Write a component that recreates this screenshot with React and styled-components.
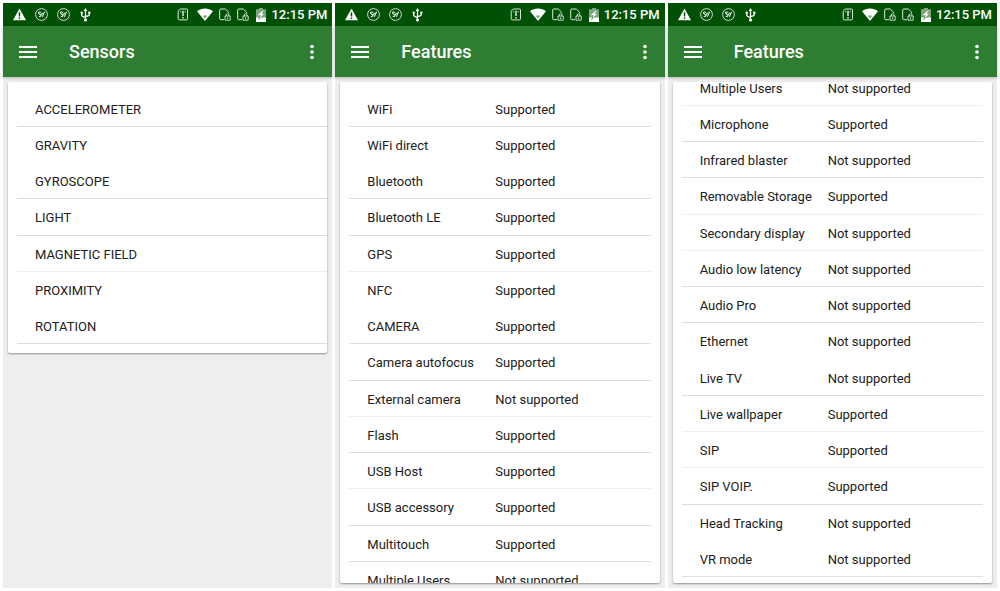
import React from 'react';
import styled, { createGlobalStyle } from 'styled-components';

const GlobalStyle = createGlobalStyle`
  * {
    box-sizing: border-box;
  }
  body {
    margin: 0;
    background-color: #ffffff;
    font-family: Roboto, 'Liberation Sans', sans-serif;
    color: #212121;
  }
`;

const lineColors = {
  strong: '#dedede',
  soft: '#eeeeee',
  none: 'transparent',
};

const Gallery = styled.main`
  display: grid;
  grid-template-columns: repeat(3, minmax(0, 1fr));
  gap: 3px;
  height: 100vh;
  padding: 3px;
`;

const Screen = styled.section`
  display: flex;
  flex-direction: column;
  min-height: 0;
  background-color: #eeeeee;
`;

const StatusBar = styled.div`
  display: flex;
  flex-shrink: 0;
  align-items: center;
  justify-content: space-between;
  height: 23px;
  padding: 0 5px 0 10px;
  background-color: #005005;
  color: #ffffff;
`;

const IconGroup = styled.div`
  display: flex;
  align-items: center;
  gap: ${({ $gap }) => $gap};
  svg {
    display: block;
  }
`;

const Clock = styled.time`
  margin-left: 4px;
  font-size: 13px;
  font-weight: 500;
  line-height: 16px;
  white-space: nowrap;
`;

const AppBar = styled.header`
  display: flex;
  flex-shrink: 0;
  align-items: center;
  height: 51px;
  padding: 0 9px 0 13px;
  background-color: #2e7d32;
  color: #ffffff;
  box-shadow: 0 1px 3px rgba(0, 0, 0, 0.25);
`;

const Title = styled.h1`
  flex: 1;
  margin: 0 0 0 29px;
  font-size: 18px;
  font-weight: 500;
  line-height: 24px;
`;

const IconButton = styled.button`
  display: flex;
  padding: 0;
  border: none;
  background: none;
  color: inherit;
  cursor: pointer;
`;

const Card = styled.div`
  display: flex;
  flex-direction: column;
  flex: ${({ $fill }) => $fill ? '1' : 'none'};
  justify-content: ${({ $scrolled }) => $scrolled ? 'flex-end' : 'flex-start'};
  min-height: 0;
  margin: 5px;
  padding: ${({ $scrolled }) => $scrolled ? '0 9px 6px' : '9px'};
  overflow: hidden;
  border-radius: 2px;
  background-color: #ffffff;
  box-shadow: 0 1px 2px rgba(0, 0, 0, 0.4);
`;

const SensorList = styled.ul`
  margin: 0 -9px 0 0;
  padding: 0;
  list-style: none;
`;

const SensorItem = styled.li`
  display: flex;
  align-items: center;
  height: 36px;
  padding: 2px 0 0 18px;
  border-bottom: 1px solid ${({ $line }) => lineColors[$line]};
  font-size: 13px;
  line-height: 16px;
  &:nth-child(4n) {
    height: 37px;
  }
`;

const FeatureTable = styled.table`
  flex-shrink: 0;
  width: 100%;
  table-layout: fixed;
  border-collapse: separate;
  border-spacing: 0;
  font-size: 13px;
  line-height: 16px;
`;

const FeatureRow = styled.tr`
  height: 36px;
  &:nth-child(4n) {
    height: 37px;
  }
  th,
  td {
    padding: 2px 0 0;
    border-bottom: 1px solid ${({ $line }) => lineColors[$line]};
    font-weight: 400;
    text-align: left;
    white-space: nowrap;
  }
  th {
    width: 146px;
    padding-left: 18px;
  }
`;

const WarningIcon = () => (
  <svg width='13' height='13' viewBox='0 0 13 13'>
    <path d='M6.5 0.6L13 12.2H0z' fill='#ffffff' />
    <path d='M6.5 4.2v4.2M6.5 9.4v1.5' stroke='#005005' strokeWidth='1.5' />
  </svg>
);

const BadgeIcon = () => (
  <svg width='13' height='13' viewBox='0 0 13 13' fill='none' stroke='#e3efe3'>
    <circle cx='6.5' cy='6.5' r='5.9' strokeWidth='0.9' />
    <path d='M6 4.6C4.9 3.6 3.3 4 3.6 5.1c.3 1 1.900 .9 2 2.100M3.700 8.300l1.400.4 1.500-2.200.9-1.800M6.900 8.600c1.300-.2 1.300-1.700 1.600-2.800l1.200-1.900' strokeWidth='1.1' />
  </svg>
);

const UsbIcon = () => (
  <svg width='13' height='14' viewBox='0 0 13 14' fill='none' stroke='#ffffff'>
    <path d='M6.5 2.5v9M2.700 5v2.200c0 1 .6 1.300 3.800 2.400M10.300 5v1.700c0 1-.6 1.200-3.800 2' strokeWidth='1.3' />
    <path d='M6.5 0L8.3 3H4.7z' fill='#ffffff' stroke='none' />
    <circle cx='2.7' cy='4.8' r='1.2' fill='#ffffff' stroke='none' />
    <path d='M9.2 3.6h2.2v2.2H9.2z' fill='#ffffff' stroke='none' />
    <circle cx='6.5' cy='12' r='1.6' fill='#ffffff' stroke='none' />
  </svg>
);

const SimIcon = () => (
  <svg width='16' height='13' viewBox='0 0 16 13' fill='none' stroke='#dbe9db'>
    <path d='M5.2 1h6.3c.7 0 1 .4 1 1v8.8c0 .7-.4 1.1-1 1.1H4.3c-.7 0-1.1-.4-1.1-1.1V3.2z' />
    <path d='M5.8 3v1.4M10.2 3v1.4' strokeWidth='0.9' />
    <path d='M8 2.800v5.200M8 9v1.500' strokeWidth='1.500' />
  </svg>
);

const WifiIcon = () => (
  <svg width='16' height='13' viewBox='0 0 16 13'>
    <path d='M0 3.300C4.600-.5 11.400-.5 16 3.300L8 13z' fill='#ffffff' />
    <path d='M5.900 7.900c1.300-.9 2.900-.9 4.200 0L8 10.400z' fill='#7fa681' />
  </svg>
);

const LockedPageIcon = () => (
  <svg width='12' height='13' viewBox='0 0 12 13' fill='none' stroke='#dbe9db'>
    <path d='M5 11.700H1.700c-.6 0-1-.4-1-1V2c0-.6.4-1 1-1h4.600l3.300 3.200v1' />
    <path d='M7.200 8V6.900c0-1.700 2.800-1.700 2.800 0V8' strokeWidth='0.9' />
    <path d='M6 8h5.200v4.200H6zM8.600 9.300v1.800' strokeWidth='0.9' />
  </svg>
);

const BatteryIcon = () => (
  <svg width='12' height='14' viewBox='0 0 12 14'>
    <path d='M4 0h4v1.300h3V10H1V1.300h3z' fill='#7fa681' />
    <path d='M1 9.500h10V14H1z' fill='#ffffff' />
    <path d='M8.600 2L2.600 7.300h2.900L3.600 11.500l5.800-5.200H6.700z' fill='#ffffff' />
    <path d='M5.500 7.300L3.600 11.500l5.800-5.200' fill='none' stroke='#005005' strokeOpacity='0.6' strokeWidth='0.7' />
  </svg>
);

const MenuIcon = () => (
  <svg width='24' height='24' viewBox='0 0 24 24'>
    <path d='M3 18h18v-2H3v2zm0-5h18v-2H3v2zm0-7v2h18V6H3z' fill='#ffffff' />
  </svg>
);

const MoreIcon = () => (
  <svg width='22' height='22' viewBox='0 0 24 24' fill='#ffffff'>
    <circle cx='12' cy='6' r='2' />
    <circle cx='12' cy='12' r='2' />
    <circle cx='12' cy='18' r='2' />
  </svg>
);

const sensors = [
  ['ACCELEROMETER', 'strong'],
  ['GRAVITY', 'none'],
  ['GYROSCOPE', 'strong'],
  ['LIGHT', 'strong'],
  ['MAGNETIC FIELD', 'soft'],
  ['PROXIMITY', 'none'],
  ['ROTATION', 'strong'],
];

const features = [
  ['WiFi', true, 'strong'],
  ['WiFi direct', true, 'none'],
  ['Bluetooth', true, 'strong'],
  ['Bluetooth LE', true, 'strong'],
  ['GPS', true, 'soft'],
  ['NFC', true, 'none'],
  ['CAMERA', true, 'strong'],
  ['Camera autofocus', true, 'strong'],
  ['External camera', false, 'soft'],
  ['Flash', true, 'strong'],
  ['USB Host', true, 'soft'],
  ['USB accessory', true, 'strong'],
  ['Multitouch', true, 'strong'],
  ['Multiple Users', false, 'soft'],
];

const moreFeatures = [
  ['Multiple Users', false, 'soft'],
  ['Microphone', true, 'strong'],
  ['Infrared blaster', false, 'strong'],
  ['Removable Storage', true, 'soft'],
  ['Secondary display', false, 'soft'],
  ['Audio low latency', false, 'strong'],
  ['Audio Pro', false, 'strong'],
  ['Ethernet', false, 'none'],
  ['Live TV', false, 'strong'],
  ['Live wallpaper', true, 'soft'],
  ['SIP', true, 'soft'],
  ['SIP VOIP.', true, 'strong'],
  ['Head Tracking', false, 'none'],
  ['VR mode', false, 'strong'],
];

const Phone = ({ title, children }) => (
  <Screen>
    <StatusBar>
      <IconGroup $gap='9px'>
        <WarningIcon />
        <BadgeIcon />
        <BadgeIcon />
        <UsbIcon />
      </IconGroup>
      <IconGroup $gap='6px'>
        <SimIcon />
        <WifiIcon />
        <LockedPageIcon />
        <LockedPageIcon />
        <IconGroup $gap='0'>
          <BatteryIcon />
          <Clock>12:15 PM</Clock>
        </IconGroup>
      </IconGroup>
    </StatusBar>
    <AppBar>
      <IconButton aria-label='Menu'>
        <MenuIcon />
      </IconButton>
      <Title>{title}</Title>
      <IconButton aria-label='More options'>
        <MoreIcon />
      </IconButton>
    </AppBar>
    {children}
  </Screen>
);

const Features = ({ rows }) => (
  <FeatureTable>
    <tbody>
      {rows.map(([name, supported, line]) => (
        <FeatureRow key={name} $line={line}>
          <th scope='row'>{name}</th>
          <td>{supported ? 'Supported' : 'Not supported'}</td>
        </FeatureRow>
      ))}
    </tbody>
  </FeatureTable>
);

const App = () => (
  <>
    <GlobalStyle />
    <Gallery>
      <Phone title='Sensors'>
        <Card>
          <SensorList>
            {sensors.map(([name, line]) => (
              <SensorItem key={name} $line={line}>{name}</SensorItem>
            ))}
          </SensorList>
        </Card>
      </Phone>
      <Phone title='Features'>
        <Card $fill>
          <Features rows={features} />
        </Card>
      </Phone>
      <Phone title='Features'>
        <Card $fill $scrolled>
          <Features rows={moreFeatures} />
        </Card>
      </Phone>
    </Gallery>
  </>
);

export default App;
